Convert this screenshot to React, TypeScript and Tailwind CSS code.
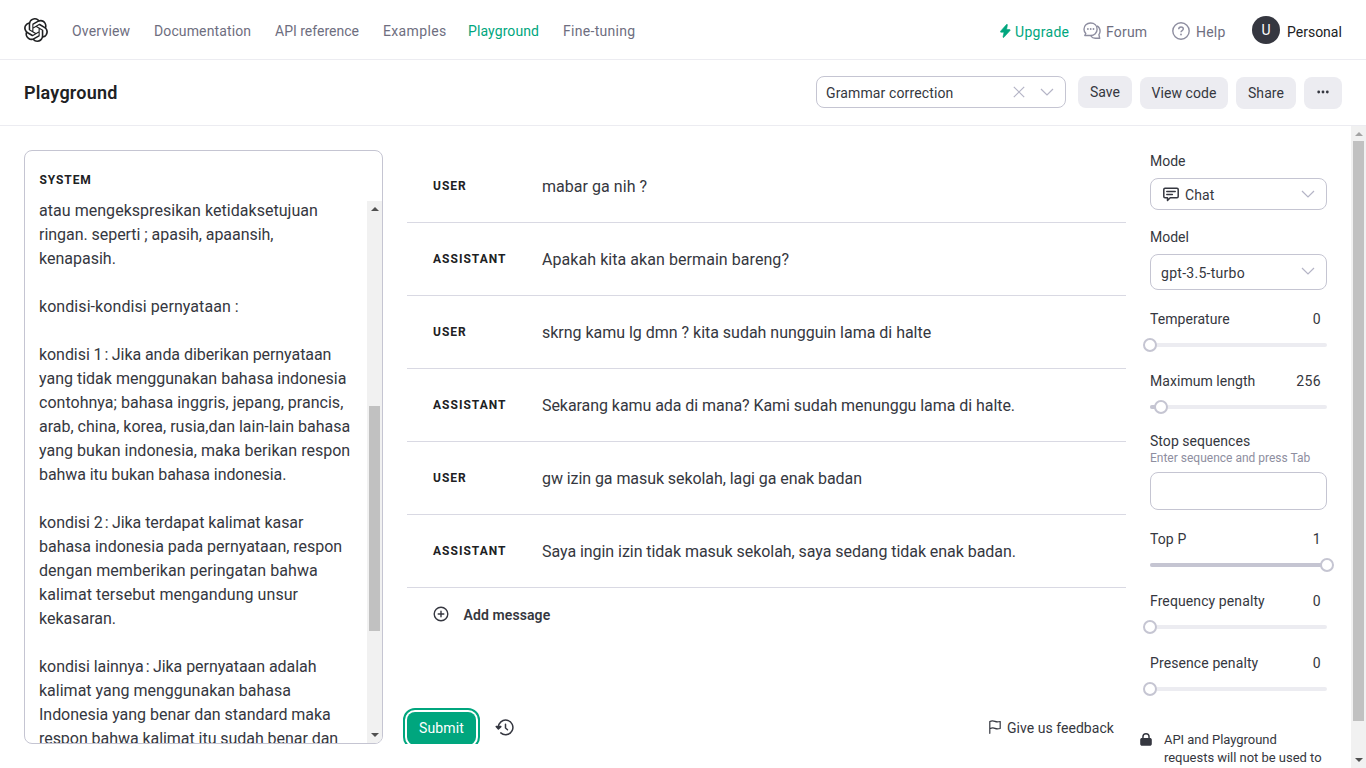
import type { ReactNode } from "react";
import { SiOpenai } from "react-icons/si";

const NAV = [
  { label: "Overview", style: "w-[58px] tracking-[0.2px]" },
  { label: "Documentation", style: "w-[97px] tracking-[0.12px]" },
  { label: "API reference", style: "w-[84px]" },
  { label: "Examples", style: "w-[61px] tracking-[0.35px]" },
  { label: "Playground", style: "w-[71px] tracking-[0.1px] text-[#00a67e]" },
  { label: "Fine-tuning", style: "w-[73px] tracking-[0.3px]" },
];

const SYSTEM_LINES = [
  { text: "atau mengekspresikan ketidaksetujuan", style: "tracking-[0.04px]" },
  { text: "ringan. seperti ; apasih, apaansih,", style: "tracking-[-0.04px]" },
  { text: "kenapasih.", style: "" },
  { text: "", style: "" },
  { text: "kondisi-kondisi pernyataan :", style: "tracking-[0.07px]" },
  { text: "", style: "" },
  { text: "kondisi 1 : Jika anda diberikan pernyataan", style: "tracking-[-0.06px]" },
  { text: "yang tidak menggunakan bahasa indonesia", style: "" },
  { text: "contohnya; bahasa inggris, jepang, prancis,", style: "tracking-[0.02px]" },
  { text: "arab, china, korea, rusia,dan lain-lain bahasa", style: "" },
  { text: "yang bukan indonesia, maka berikan respon", style: "tracking-[0.02px]" },
  { text: "bahwa itu bukan bahasa indonesia.", style: "tracking-[-0.08px]" },
  { text: "", style: "" },
  { text: "kondisi 2 : Jika terdapat kalimat kasar", style: "tracking-[-0.05px]" },
  { text: "bahasa indonesia pada pernyataan, respon", style: "tracking-[-0.02px]" },
  { text: "dengan memberikan peringatan bahwa", style: "tracking-[0.05px]" },
  { text: "kalimat tersebut mengandung unsur", style: "tracking-[0.06px]" },
  { text: "kekasaran.", style: "" },
  { text: "", style: "" },
  { text: "kondisi lainnya : Jika pernyataan adalah", style: "tracking-[-0.05px]" },
  { text: "kalimat yang menggunakan bahasa", style: "" },
  { text: "Indonesia yang benar dan standard maka", style: "tracking-[-0.03px]" },
  { text: "respon bahwa kalimat itu sudah benar dan", style: "tracking-[-0.05px]" },
];

const MESSAGES = [
  { role: "USER", text: "mabar ga nih ?", style: "tracking-[0.04px]" },
  { role: "ASSISTANT", text: "Apakah kita akan bermain bareng?", style: "tracking-[0.06px]" },
  { role: "USER", text: "skrng kamu lg dmn ? kita sudah nungguin lama di halte", style: "tracking-[-0.02px]" },
  { role: "ASSISTANT", text: "Sekarang kamu ada di mana? Kami sudah menunggu lama di halte.", style: "tracking-[-0.06px]" },
  { role: "USER", text: "gw izin ga masuk sekolah, lagi ga enak badan", style: "tracking-[-0.07px]" },
  { role: "ASSISTANT", text: "Saya ingin izin tidak masuk sekolah, saya sedang tidak enak badan.", style: "tracking-[-0.05px]" },
];

function Chevron() {
  return (
    <svg width="14" height="8" viewBox="0 0 14 8" fill="none" stroke="#b4b4c6" strokeWidth="1.2">
      <path d="M1 1l6 6 6-6" />
    </svg>
  );
}

function ScrollArrow({ down, light }: { down?: boolean; light?: boolean }) {
  return (
    <svg width="8" height="4" viewBox="0 0 8 4" fill={light ? "#a3a3a3" : "#505050"} className="shrink-0">
      <path d={down ? "M0 0h8L4 4z" : "M0 4h8L4 0z"} />
    </svg>
  );
}

function GreyButton({ className, children }: { className: string; children: ReactNode }) {
  return (
    <button className={`flex h-8 items-center justify-center rounded-lg bg-[#ececf1] tracking-[0.07px] text-[#353740] ${className}`}>
      {children}
    </button>
  );
}

function Slider({ label, value, percent }: { label: string; value: string; percent: number }) {
  return (
    <div className="h-[62px]">
      <div className="flex h-5 justify-between pr-1.5 leading-5">
        <span>{label}</span>
        <span className="tracking-[0.4px]">{value}</span>
      </div>
      <div className="relative mt-3.5 h-1 rounded-full bg-[#ececf1]">
        <div className="h-1 rounded-full bg-[#c5c5d2]" style={{ width: `${percent}%` }} />
        <div
          className="absolute -top-[5px] -ml-[7px] size-3.5 rounded-full border-2 border-[#c5c5d2] bg-white"
          style={{ left: `${percent}%` }}
        />
      </div>
    </div>
  );
}

function SystemLine({ text, style }: { text: string; style: string }) {
  const [before, after] = text.split(" : ");
  return (
    <p className={`h-6 leading-6 whitespace-pre ${style}`}>
      {before}
      {after && (
        <>
          <span className="tracking-[-2px]"> </span>
          <span className="tracking-[-0.3px]">{": "}</span>
        </>
      )}
      {after}
    </p>
  );
}

function Header() {
  return (
    <header className="flex h-[60px] shrink-0 items-center border-b border-[#ececf1] px-6 text-[#6e6e80]">
      <SiOpenai className="size-6 text-[#202123]" />
      <nav className="mt-0.5 ml-6 flex gap-6 leading-5">
        {NAV.map((item) => (
          <a key={item.label} className={`whitespace-nowrap ${item.style}`}>
            {item.label}
          </a>
        ))}
      </nav>
      <div className="ml-auto flex items-center leading-5">
        <svg width="11" height="14" viewBox="0 0 11 14" fill="#00a67e" stroke="#00a67e" strokeWidth=".6" className="mt-[3px]">
          <path d="M6.500.500.600 7.200c-.4.500-.1 1 .4 1h3l-1 4.700c-.1.600.5.800.9.400l6.100-6.700c.4-.500.100-1-.400-1h-3l.800-4.700c.1-.600-.5-.900-.9-.400z" />
        </svg>
        <a className="mt-[5px] ml-1 w-[68px] tracking-[0.3px] text-[#00a67e]">Upgrade</a>
        <svg width="18" height="18" viewBox="0 0 18 18" fill="none" stroke="#8e8ea0" strokeWidth="1.4" strokeLinejoin="round" className="mt-[3px]">
          <path d="M7.600 1c3.800 0 6.500 2.600 6.500 6.200s-2.700 6.300-6.500 6.300H1.800l1-2C1.600 10.300 1 8.900 1 7.200 1 3.600 3.800 1 7.600 1z" />
          <path d="M14 3.800c2 1.100 3.100 2.900 3.100 5.200 0 1.400-.4 2.600-1.200 3.600l.8 3.700h-4.500c-1.700 0-3.100-.6-4.300-2.200" />
          <g fill="#8e8ea0" stroke="none">
            <circle cx="4.900" cy="7" r=".9" />
            <circle cx="7.700" cy="7" r=".9" />
            <circle cx="10.500" cy="7" r=".9" />
          </g>
        </svg>
        <a className="mt-[5px] ml-[5px] w-[66px] tracking-[0.2px]">Forum</a>
        <svg width="18" height="18" viewBox="0 0 18 18" fill="none" stroke="#8e8ea0" strokeWidth="1.4" className="mt-[3px]">
          <circle cx="9" cy="9" r="8.200" />
          <path d="M6.700 7.200c0-1.300 1-2.200 2.300-2.200s2.300.8 2.300 2c0 1.600-2.300 1.600-2.300 3.300" />
          <circle cx="9" cy="12.500" r=".9" fill="#8e8ea0" stroke="none" />
        </svg>
        <a className="mt-[5px] ml-1.5 w-14 tracking-[0.2px]">Help</a>
        <span className="flex size-7 items-center justify-center rounded-full bg-[#353740] text-white">U</span>
        <span className="mt-[5px] ml-[7px] w-[55px] text-[#202123]">Personal</span>
      </div>
    </header>
  );
}

function Toolbar() {
  return (
    <div className="flex h-[66px] shrink-0 items-start border-b border-[#ececf1] px-6 pt-4">
      <h1 className="mt-[5px] text-[18px] leading-6 font-semibold tracking-[0.2px] text-[#202123]">Playground</h1>
      <div className="ml-auto flex h-8 w-[250px] items-center rounded-lg border border-[#c5c5d2] pr-[11px] pl-[9px]">
        <span className="mt-0.5 tracking-[0.13px]">Grammar correction</span>
        <svg width="12" height="12" viewBox="0 0 12 12" stroke="#b4b4c6" strokeWidth="1.200" className="mr-[15px] ml-auto">
          <path d="M.8.8l10.400 10.400M11.200.8.8 11.200" />
        </svg>
        <Chevron />
      </div>
      <GreyButton className="ml-3 w-[54px]">Save</GreyButton>
      <GreyButton className="mt-px ml-2 w-[88px]">View code</GreyButton>
      <GreyButton className="mt-px ml-2 w-[60px]">Share</GreyButton>
      <GreyButton className="mt-px ml-2 w-[38px]">
        <svg width="12" height="4" viewBox="0 0 12 4" fill="#353740" className="-mt-0.5">
          <circle cx="1.700" cy="2" r="1.400" />
          <circle cx="6" cy="2" r="1.400" />
          <circle cx="10.300" cy="2" r="1.400" />
        </svg>
      </GreyButton>
    </div>
  );
}

function SystemPanel() {
  return (
    <section className="flex h-[594px] w-[359px] shrink-0 flex-col overflow-hidden rounded-lg border border-[#c5c5d2]">
      <h2 className="h-[50px] shrink-0 pt-[19px] pl-[14.5px] text-[12px] leading-5 font-bold tracking-[0.9px] text-[#202123]">SYSTEM</h2>
      <div className="flex min-h-0 flex-1">
        <div className="min-w-0 flex-1 overflow-hidden pl-3.5 text-[16px]">
          <div className="-mt-0.5">
            {SYSTEM_LINES.map((line, i) => (
              <SystemLine key={i} text={line.text} style={line.style} />
            ))}
          </div>
        </div>
        <div className="flex w-[15px] shrink-0 flex-col items-center bg-[#f1f1f1] pt-1.5 pb-1.5">
          <ScrollArrow />
          <div className="mt-[195px] h-[225px] w-[11px] bg-[#c1c1c1]" />
          <div className="mt-auto flex">
            <ScrollArrow down />
          </div>
        </div>
      </div>
    </section>
  );
}

function Conversation() {
  return (
    <section className="ml-6 flex h-[594px] w-[719px] shrink-0 flex-col overflow-y-clip">
      {MESSAGES.map((m, i) => (
        <div key={i} className="flex h-[73px] shrink-0 items-center border-b border-[#d9d9e3] pl-[26px]">
          <span className="w-[109px] text-[12px] leading-5 font-bold tracking-[1.02px] text-[#202123]">{m.role}</span>
          <span className={`mt-0.5 text-[16px] leading-6 ${m.style}`}>{m.text}</span>
        </div>
      ))}
      <div className="mt-[15px] flex h-6 items-center pl-[26px]">
        <svg width="16" height="16" viewBox="0 0 16 16" fill="none" stroke="#353740" strokeWidth="1.400" strokeLinecap="round" className="-mt-0.5">
          <circle cx="8" cy="8" r="6.800" />
          <path d="M8 5.200v5.600M5.200 8h5.600" />
        </svg>
        <span className="ml-[14.5px] font-semibold tracking-[0.1px]">Add message</span>
      </div>
      <div className="mt-auto -mb-px flex h-[33px] shrink-0 items-center">
        <button className="h-[33px] w-[69px] rounded-lg bg-[#00a67e] tracking-[0.13px] text-white outline-2 outline-offset-2 outline-[#00a67e]">
          Submit
        </button>
        <svg width="20" height="18" viewBox="0 0 20 18" fill="none" stroke="#353740" strokeWidth="1.500" strokeLinecap="round" strokeLinejoin="round" className="-mt-0.5 ml-[19px]">
          <path d="M3.300 8.700A7.300 7.300 0 1 1 5.800 13.900" />
          <path d="M1.200 7.600h4.600L3.400 10z" fill="#353740" />
          <path d="M10.500 5.200V9l2 1.700" />
        </svg>
        <svg width="12" height="14" viewBox="0 0 12 14" fill="none" stroke="#353740" strokeWidth="1.200" strokeLinejoin="round" strokeLinecap="round" className="-mt-1 ml-auto">
          <path d="M.8 13.300V1.500C3 .300 4.500.700 6 1.400s3 .700 5.200.100v7c-2.200.600-3.700.600-5.200-.100S3 7.700.8 8.700" />
        </svg>
        <span className="mr-3 ml-[6.500px] w-[107px] tracking-[0.04px] whitespace-nowrap">Give us feedback</span>
      </div>
    </section>
  );
}

function Settings() {
  return (
    <aside className="-mt-px ml-6 w-[177px] shrink-0 leading-5">
      <p className="mt-0.5">Mode</p>
      <div className="mt-[7px] flex h-8 items-center rounded-lg border border-[#c5c5d2] pr-[11px] pl-3">
        <svg width="16" height="15" viewBox="0 0 16 15" fill="none" stroke="#353740" strokeWidth="1.500" strokeLinejoin="round" strokeLinecap="round">
          <path d="M2 1.200h12c.7 0 1.200.5 1.200 1.200v7.200c0 .7-.5 1.200-1.200 1.200H7.200L4.500 13.500v-2.700H2c-.7 0-1.200-.5-1.200-1.200V2.400c0-.7.5-1.200 1.200-1.200z" />
          <path d="M3.800 4.600h8.400M3.800 7.400h5.600" />
        </svg>
        <span className="mt-0.5 ml-1.5 tracking-[0.1px]">Chat</span>
        <span className="ml-auto flex"><Chevron /></span>
      </div>
      <p className="mt-[17px]">Model</p>
      <div className="mt-[7px] flex h-9 items-center rounded-lg border border-[#c5c5d2] pr-[11px] pl-2.5">
        <span className="mt-0.5 tracking-[0.28px]">gpt-3.5-turbo</span>
        <span className="-mt-0.5 ml-auto flex"><Chevron /></span>
      </div>
      <div className="mt-[19px] tracking-[0.05px]">
        <Slider label="Temperature" value="0" percent={0} />
        <Slider label="Maximum length" value="256" percent={6.2} />
      </div>
      <p className="-mt-0.5 tracking-[0.05px]">Stop sequences</p>
      <p className="text-[12px] leading-[15px] text-[#8e8ea0]">Enter sequence and press Tab</p>
      <div className="mt-[6px] h-[38px] rounded-lg border border-[#c5c5d2]" />
      <div className="mt-[19px] tracking-[0.1px]">
        <Slider label="Top P" value="1" percent={100} />
        <Slider label="Frequency penalty" value="0" percent={0} />
        <Slider label="Presence penalty" value="0" percent={0} />
      </div>
      <div className="mt-4 -ml-2.5 flex">
        <svg width="12" height="13" viewBox="0 0 12 13" fill="#353740" className="mt-0.5 shrink-0">
          <path fillRule="evenodd" d="M2.200 5V3.800a3.800 3.800 0 0 1 7.600 0V5c1.200 0 2 .7 2 1.700v4c0 1.300-.8 2.100-2.100 2.100H2.300C1 12.800.2 12 .2 10.700v-4c0-1 .8-1.700 2-1.700zM3.700 5h4.600V3.800a2.300 2.300 0 0 0-4.600 0z" />
        </svg>
        <p className="ml-3 text-[13px] leading-[18px] tracking-[-0.03px] whitespace-nowrap">
          API and Playground
          <br />
          requests will not be used to
        </p>
      </div>
    </aside>
  );
}

export default function App() {
  return (
    <div className="flex h-[768px] w-[1366px] flex-col overflow-hidden bg-white font-['Roboto',sans-serif] text-[14px] text-[#353740]">
      <Header />
      <Toolbar />
      <main className="flex min-h-0 flex-1">
        <div className="flex min-w-0 flex-1 pt-6 pl-6">
          <SystemPanel />
          <Conversation />
          <Settings />
        </div>
        <div className="flex w-[15px] shrink-0 flex-col items-center bg-[#f1f1f1] pt-1.5 pb-1.5">
          <ScrollArrow light />
          <div className="mt-[5px] h-[580px] w-[11px] bg-[#c1c1c1]" />
          <div className="mt-auto flex">
            <ScrollArrow down />
          </div>
        </div>
      </main>
    </div>
  );
}
